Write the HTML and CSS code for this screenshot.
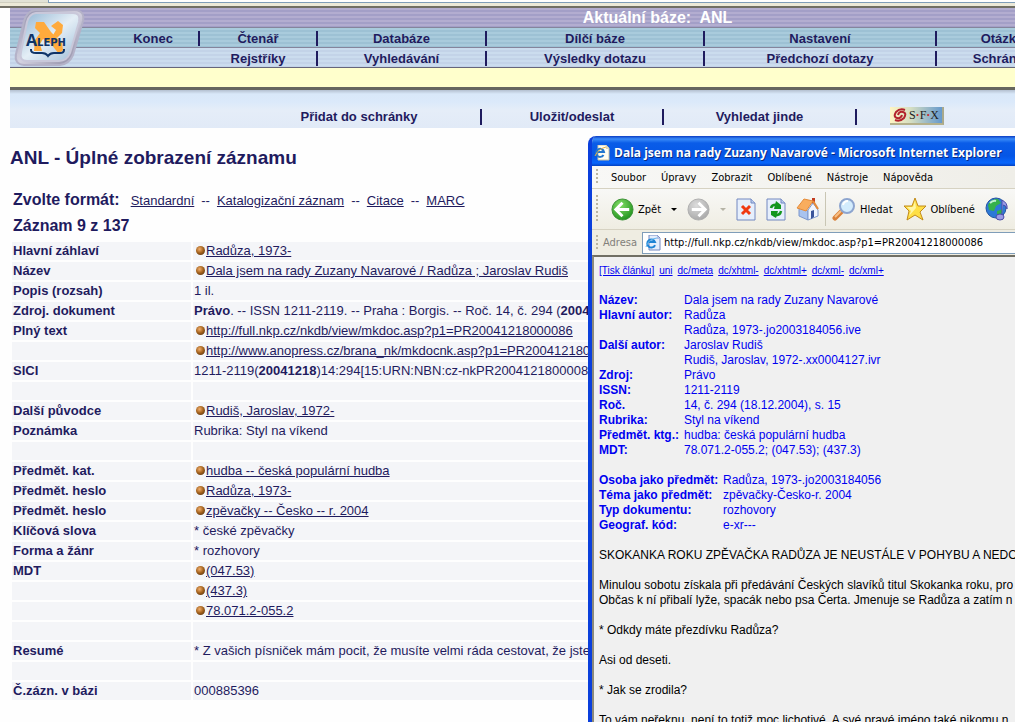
FILE: index.html
```
<!DOCTYPE html>
<html lang="cs">
    <head>
        <meta charset="utf-8">
        <title>ANL - Úplné zobrazení záznamu</title>
        <link rel="stylesheet" href="styles.css">
    </head>
    <body>
        <div class="chrome"><div class="chrome-tab"></div><div class="chrome-field"></div></div>
        <div class="page">
            <header class="top">
                <svg class="logo" viewBox="0 0 74 60" width="74" height="60">
                    <defs>
                        <linearGradient id="lg" x1="0" y1="0" x2="1" y2="1">
                            <stop offset="0" stop-color="#8fb4d2"/>
                            <stop offset=".5" stop-color="#e4eef6"/>
                            <stop offset="1" stop-color="#9dbdd8"/>
                        </linearGradient>
                        <linearGradient id="rim" x1="0" y1="0" x2="1" y2="1">
                            <stop offset="0" stop-color="#8d8aa6"/>
                            <stop offset=".5" stop-color="#d4d2e0"/>
                            <stop offset="1" stop-color="#85819c"/>
                        </linearGradient>
                    </defs>
                    <path d="M22 2 H62 Q72 3 70 13 L60 47 Q56 56 47 57 H11 Q1 56 3 46 L11 13 Q14 3 22 2Z" fill="url(#rim)" stroke="#b4b2c8" stroke-width="2"/>
                    <path d="M23 5 H60 Q68 5 66 14 L57 45 Q54 53 46 53 H14 Q6 53 8 44 L14 14 Q16 6 23 5Z" fill="url(#lg)" stroke="#c9c8da" stroke-width="2"/>
                    <path d="M23 14 L31 14 L38 24 L49 35 L50 42 L46 46 L38 36 L30 31 L27 36 L29 43 H21 L22 32 L27 25 L22 20Z" fill="#ffaa3c"/>
                    <path d="M38 18 L45 13 L50 17 L49 25 L44 30 L40 27 L43 22Z" fill="#ffaa3c"/>
                    <text x="13" y="38" class="logo-text"><tspan class="logo-big">A</tspan>LEPH</text>
                    <path d="M18 41 V42 Q18 45 23 45 H29 Q33 45 35 48 Q37 45 41 45 H47 Q51 45 51 42 V41" fill="none" stroke="#0f3468" stroke-width="2"/>
                </svg>
                <div class="base">Aktuální báze:&nbsp; ANL</div>
                <nav class="menu menu1">
                    <a href="#">Konec</a>
                    <a href="#">Čtenář</a>
                    <a href="#">Databáze</a>
                    <a href="#">Dílčí báze</a>
                    <a href="#">Nastavení</a>
                    <a href="#" class="last"><span>Otázky</span></a>
                </nav>
                <nav class="menu menu2">
                    <i></i>
                    <a href="#">Rejstříky</a>
                    <a href="#">Vyhledávání</a>
                    <a href="#">Výsledky dotazu</a>
                    <a href="#">Předchozí dotazy</a>
                    <a href="#" class="last"><span>Schránka</span></a>
                </nav>
                <div class="yellow"></div>
            </header>
            <nav class="actions">
                <a href="#">Přidat do schránky</a>
                <a href="#">Uložit/odeslat</a>
                <a href="#">Vyhledat jinde</a>
                <a href="#" class="sfx">
                    <svg viewBox="0 0 14 14" width="14" height="14">
                        <g fill="none" stroke="#b3222c" stroke-width="2">
                            <path d="M12 2 Q7 0 3 4 Q0 9 4 10 Q8 11 9 7"/>
                            <path d="M2 12 Q7 14 11 10 Q14 5 10 4 Q6 3 5 7"/>
                        </g>
                    </svg>
                    <span>S<b>·</b>F<b>·</b>X</span>
                </a>
            </nav>

            <main>
                <h1>ANL - Úplné zobrazení záznamu</h1>
                <div class="format">
                    <h2>Zvolte formát:</h2>
                    <a href="#">Standardní</a><span>--</span>
                    <a href="#">Katalogizační záznam</a><span>--</span>
                    <a href="#">Citace</a><span>--</span>
                    <a href="#">MARC</a>
                </div>
                <h2 class="count">Záznam 9 z 137</h2>
                <table class="record">
                    <tr><th>Hlavní záhlaví</th><td><i class="dot"></i><a href="#">Radůza, 1973-</a></td></tr>
                    <tr><th>Název</th><td><i class="dot"></i><a href="#">Dala jsem na rady Zuzany Navarové / Radůza ; Jaroslav Rudiš</a></td></tr>
                    <tr><th>Popis (rozsah)</th><td>1 il.</td></tr>
                    <tr><th>Zdroj. dokument</th><td><b>Právo</b>. -- ISSN 1211-2119. -- Praha : Borgis. -- Roč. 14, č. 294 (<b>20041218</b>), s. 15</td></tr>
                    <tr><th>Plný text</th><td><i class="dot"></i><a href="#">http://full.nkp.cz/nkdb/view/mkdoc.asp?p1=PR20041218000086</a></td></tr>
                    <tr><th></th><td><i class="dot"></i><a href="#">http://www.anopress.cz/brana_nk/mkdocnk.asp?p1=PR20041218000086</a></td></tr>
                    <tr><th>SICI</th><td>1211-2119(<b>20041218</b>)14:294[15:URN:NBN:cz-nkPR20041218000086</td></tr>
                    <tr><th></th><td></td></tr>
                    <tr><th>Další původce</th><td><i class="dot"></i><a href="#">Rudiš, Jaroslav, 1972-</a></td></tr>
                    <tr><th>Poznámka</th><td>Rubrika: Styl na víkend</td></tr>
                    <tr><th></th><td></td></tr>
                    <tr><th>Předmět. kat.</th><td><i class="dot"></i><a href="#">hudba -- česká populární hudba</a></td></tr>
                    <tr><th>Předmět. heslo</th><td><i class="dot"></i><a href="#">Radůza, 1973-</a></td></tr>
                    <tr><th>Předmět. heslo</th><td><i class="dot"></i><a href="#">zpěvačky -- Česko -- r. 2004</a></td></tr>
                    <tr><th>Klíčová slova</th><td>* české zpěvačky</td></tr>
                    <tr><th>Forma a žánr</th><td>* rozhovory</td></tr>
                    <tr><th>MDT</th><td><i class="dot"></i><a href="#">(047.53)</a></td></tr>
                    <tr><th></th><td><i class="dot"></i><a href="#">(437.3)</a></td></tr>
                    <tr><th></th><td><i class="dot"></i><a href="#">78.071.2-055.2</a></td></tr>
                    <tr><th></th><td></td></tr>
                    <tr><th>Resumé</th><td>* Z vašich písniček mám pocit, že musíte velmi ráda cestovat, že jste</td></tr>
                    <tr><th></th><td></td></tr>
                    <tr><th>Č.zázn. v bázi</th><td>000885396</td></tr>
                </table>
            </main>
        </div>

        <section class="window">
            <div class="titlebar">
                <svg viewBox="0 0 16 16" width="16" height="16">
                    <path d="M4 0 H12 L15 3 V15 H4Z" fill="#fffdf2" stroke="#c9c3a4"/>
                    <path d="M12 0 V4 H15" fill="#d8d2b8"/>
                    <path d="M9.500 10 A4 4 0 1 1 10 7 H3" fill="none" stroke="#2377cf" stroke-width="2"/>
                    <path d="M1 11 Q4 4 12 2" fill="none" stroke="#e6b040"/>
                </svg>
                <span>Dala jsem na rady Zuzany Navarové - Microsoft Internet Explorer</span>
            </div>
            <div class="menubar">
                <i class="grip"></i>
                <button type="button">Soubor</button>
                <button type="button">Úpravy</button>
                <button type="button">Zobrazit</button>
                <button type="button">Oblíbené</button>
                <button type="button">Nástroje</button>
                <button type="button">Nápověda</button>
            </div>
            <div class="tools">
                <i class="grip"></i>
                <button type="button">
                    <svg viewBox="0 0 24 24" width="23" height="23">
                        <defs><radialGradient id="gb" cx=".4" cy=".3" r=".8"><stop offset="0" stop-color="#83dd65"/><stop offset="1" stop-color="#178c18"/></radialGradient></defs>
                        <circle cx="12" cy="12" r="11" fill="url(#gb)" stroke="#3b8f35"/>
                        <path d="M12 5 L5 12 L12 19 M6 12 H19" fill="none" stroke="#fff" stroke-width="3"/>
                    </svg>
                    <span>Zpět</span>
                </button>
                <button type="button" aria-label="Historie zpět"><svg viewBox="0 0 6 3" width="6" height="3"><path d="M0 0 H6 L3 3Z" fill="#000"/></svg></button>
                <button type="button" aria-label="Vpřed">
                    <svg viewBox="0 0 24 24" width="23" height="23">
                        <defs><radialGradient id="gf" cx=".4" cy=".3" r=".8"><stop offset="0" stop-color="#dcdcdc"/><stop offset="1" stop-color="#a4a4a4"/></radialGradient></defs>
                        <circle cx="12" cy="12" r="11" fill="url(#gf)" stroke="#adadad"/>
                        <path d="M12 5 L19 12 L12 19 M18 12 H5" fill="none" stroke="#fff" stroke-width="3"/>
                    </svg>
                </button>
                <button type="button" aria-label="Historie vpřed"><svg viewBox="0 0 6 3" width="6" height="3"><path d="M0 0 H6 L3 3Z" fill="#b5b3a6"/></svg></button>
                <button type="button" aria-label="Zastavit">
                    <svg viewBox="0 0 20 23" width="20" height="23">
                        <path d="M1 1 H15 L19 5 V22 H1Z" fill="#e6effc" stroke="#7288c0"/>
                        <path d="M15 1 V5 H19" fill="#b9cbee" stroke="#7288c0"/>
                        <path d="M6 8 L14 16 M14 8 L6 16" stroke="#f03a12" stroke-width="3"/>
                    </svg>
                </button>
                <button type="button" aria-label="Aktualizovat">
                    <svg viewBox="0 0 20 23" width="20" height="23">
                        <path d="M1 1 H15 L19 5 V22 H1Z" fill="#e6effc" stroke="#7288c0"/>
                        <path d="M15 1 V5 H19" fill="#b9cbee" stroke="#7288c0"/>
                        <path d="M5 10 Q6 6 12 7" fill="none" stroke="#12961d" stroke-width="2.500"/>
                        <path d="M10 3 L15 7 V11 H8Z" fill="#12961d"/>
                        <path d="M15 13 Q14 18 8 17" fill="none" stroke="#12961d" stroke-width="2.500"/>
                        <path d="M10 20 L5 17 V13 H12Z" fill="#12961d"/>
                    </svg>
                </button>
                <div class="pair">
                    <button type="button" aria-label="Domů">
                        <svg viewBox="0 0 23 24" width="23" height="24">
                            <path d="M16 1 H19 V8 H16Z" fill="#c23c20"/>
                            <path d="M3 11 L12 14 V23 L3 19Z" fill="#a9c3ee" stroke="#7d97cc"/>
                            <path d="M12 13 L17 6 L22 13 V19 L12 23Z" fill="#eff5ff" stroke="#7d97cc"/>
                            <path d="M8 2 L17 4 L10 14 L1 11Z" fill="#f9ad5e" stroke="#e58b39"/>
                            <path d="M17 4 L22 12" stroke="#e58b39" stroke-width="2"/>
                            <path d="M15 14 L18 13 V20 L15 22Z" fill="#39549b"/>
                        </svg>
                    </button>
                    <i class="line"></i>
                    <button type="button">
                        <svg viewBox="0 0 24 24" width="24" height="24">
                            <path d="M10 14 L3 21" stroke="#d9813a" stroke-width="5" stroke-linecap="round"/>
                            <path d="M9 14 L3 20" stroke="#f8c083" stroke-width="2"/>
                            <circle cx="15" cy="9" r="7" fill="#d3ecfd" stroke="#8da5cf" stroke-width="2"/>
                            <path d="M11 8 Q12 4 16 4" fill="none" stroke="#fff" stroke-width="2"/>
                        </svg>
                        <span>Hledat</span>
                    </button>
                </div>
                <button type="button">
                    <svg viewBox="0 0 24 24" width="24" height="24">
                        <path d="M12 1 L15 9 L23 9 L17 15 L20 23 L12 18 L4 23 L6 14 L1 9 L9 9Z" fill="#ffdf45" stroke="#c18a19"/>
                        <path d="M12 4 L13 11 L6 19 L8 14 L4 10 H10Z" fill="#fff6a6"/>
                    </svg>
                    <span>Oblíbené</span>
                </button>
                <button type="button" aria-label="Média">
                    <svg viewBox="0 0 24 24" width="24" height="24">
                        <circle cx="11" cy="11" r="10" fill="#2d79d6" stroke="#2656a0"/>
                        <path d="M3 8 Q6 1 13 2 L16 6 L11 9 L9 14 L4 13Z M12 14 L18 12 L16 18 L12 20Z" fill="#35b14a"/>
                        <path d="M5 6 Q8 3 11 4" stroke="#bff0d0" stroke-width="2" fill="none"/>
                        <path d="M17 19 V3 Q23 6 22 12 Q21 8 18 8" fill="#9a9ce6" stroke="#4a4ca8"/>
                        <ellipse cx="15" cy="20" rx="4" ry="3" fill="#9a9ce6" stroke="#4a4ca8"/>
                    </svg>
                </button>
            </div>
            <div class="address">
                <i class="grip"></i>
                <label for="url">Adresa</label>
                <div class="field">
                    <svg viewBox="0 0 16 16" width="16" height="16">
                        <path d="M4 0 H12 L15 3 V15 H4Z" fill="#e3edfc" stroke="#7288c0"/>
                        <path d="M12 0 V4 H15" fill="#aebfe6"/>
                        <path d="M10 10 A4 4 0 1 1 10 7 H3" fill="none" stroke="#1d83d4" stroke-width="2"/>
                        <path d="M1 12 Q3 4 12 3" fill="none" stroke="#66b6ee"/>
                    </svg>
                    <input type="text" id="url" value="http://full.nkp.cz/nkdb/view/mkdoc.asp?p1=PR20041218000086">
                </div>
            </div>
            <article class="doc">
                <div class="formats">
                    <a href="#">[Tisk článku]</a>
                    <a href="#">uni</a>
                    <a href="#">dc/meta</a>
                    <a href="#">dc/xhtml-</a>
                    <a href="#">dc/xhtml+</a>
                    <a href="#">dc/xml-</a>
                    <a href="#">dc/xml+</a>
                </div>
                <table class="meta">
                    <tr><th>Název:</th><td>Dala jsem na rady Zuzany Navarové</td></tr>
                    <tr><th>Hlavní autor:</th><td>Radůza<br>Radůza, 1973-.jo2003184056.ive</td></tr>
                    <tr><th>Další autor:</th><td>Jaroslav Rudiš<br>Rudiš, Jaroslav, 1972-.xx0004127.ivr</td></tr>
                    <tr><th>Zdroj:</th><td>Právo</td></tr>
                    <tr><th>ISSN:</th><td>1211-2119</td></tr>
                    <tr><th>Roč.</th><td>14, č. 294 (18.12.2004), s. 15</td></tr>
                    <tr><th>Rubrika:</th><td>Styl na víkend</td></tr>
                    <tr><th>Předmět. ktg.:</th><td>hudba: česká populární hudba</td></tr>
                    <tr><th>MDT:</th><td>78.071.2-055.2; (047.53); (437.3)</td></tr>
                </table>
                <table class="meta subject">
                    <tr><th>Osoba jako předmět:</th><td>Radůza, 1973-.jo2003184056</td></tr>
                    <tr><th>Téma jako předmět:</th><td>zpěvačky-Česko-r. 2004</td></tr>
                    <tr><th>Typ dokumentu:</th><td>rozhovory</td></tr>
                    <tr><th>Geograf. kód:</th><td>e-xr---</td></tr>
                </table>
                <p>SKOKANKA ROKU ZPĚVAČKA RADŮZA JE NEUSTÁLE V POHYBU A NEDOK</p>
                <p>Minulou sobotu získala při předávání Českých slavíků titul Skokanka roku, pro<br>Občas k ní přibalí lyže, spacák nebo psa Čerta. Jmenuje se Radůza a zatím n</p>
                <p>* Odkdy máte přezdívku Radůza?</p>
                <p>Asi od deseti.</p>
                <p>* Jak se zrodila?</p>
                <p>To vám neřeknu, není to totiž moc lichotivé. A své pravé jméno také nikomu n</p>
            </article>
        </section>
    </body>
</html>
```
FILE: styles.css
```
*{
    box-sizing: border-box;
}

body{
    margin: 0;
    position: relative;
    height: 100vh;
    overflow: hidden;
    background-color: #fefefe;
    color: #1f1b5e;
    font-family: "Liberation Sans", Arial, sans-serif;
    font-size: 13px;
}

a{
    color: inherit;
}

i{
    font-style: normal;
}

.chrome{
    display: flex;
    height: 8px;
    background-color: #ece9d8;
    border-bottom: 2px solid #716f64;
}

.chrome-tab{
    width: 48px;
    height: 3px;
    background-color: #e2e2d6;
    border-bottom: 1px solid #d0cfc0;
}

.chrome-field{
    flex: 1;
    height: 3px;
    background-color: #fff;
    border-left: 1px solid #7f9db9;
    border-bottom: 1px solid #7f9db9;
}

.page{
    margin-left: 10px;
}

.top{
    position: relative;
}

.logo{
    position: absolute;
    left: 3px;
    top: 0;
}

.logo-text{
    font-family: "DejaVu Sans", sans-serif;
    font-weight: bold;
    font-size: 10px;
    fill: #0f3468;
}

.logo-big{
    font-family: "Open Sans", sans-serif;
    font-size: 16px;
}

.base{
    height: 20px;
    padding-left: 290px;
    background: repeating-linear-gradient(#b3add0 0 2px, #a39fc7 2px 4px);
    border-bottom: 1px solid #85859c;
    color: #fff;
    font-size: 16px;
    font-weight: bold;
    line-height: 19px;
    text-align: center;
}

.menu{
    display: grid;
    grid-template-columns: 190fr 118fr 169fr 218fr 232fr 78fr;
    height: 20px;
    padding: 3px 0 1px;
    font-weight: bold;
    line-height: 15px;
}

.menu a{
    border-right: 2px solid #1f1b5e;
    text-align: center;
    text-decoration: none;
    white-space: nowrap;
    overflow: hidden;
}

.menu1{
    background: repeating-linear-gradient(#a9cbdc 0 2px, #9dc1d4 2px 4px);
    border-bottom: 1px solid #85859c;
}

.menu1 a:first-child{
    padding-left: 98px;
}

.menu2{
    background: repeating-linear-gradient(#cbdcee 0 2px, #c3d3e8 2px 4px);
    border-bottom: 1px solid #66667a;
}

.menu .last{
    border-right: 0;
}

.last span{
    display: block;
    width: 130px;
}

.yellow{
    height: 22px;
    background-color: #ffffcc;
    border-bottom: 3px solid #66665e;
}

.actions{
    display: grid;
    grid-template-columns: 472fr 182fr 193fr 158fr;
    height: 38px;
    padding: 19px 0 4px;
    background: linear-gradient(#b4c0d0, #d9e8f9 4px, #dbe9fa 12px, #e5edf8 20px, #e1eaf7);
    font-weight: bold;
    line-height: 15px;
}

.actions a{
    border-right: 2px solid #1f1b5e;
    text-align: center;
    text-decoration: none;
    white-space: nowrap;
}

.actions a:first-child{
    padding-left: 228px;
}

.actions .sfx{
    display: flex;
    align-items: center;
    justify-content: space-around;
    width: 54px;
    height: 18px;
    margin: -2px 0 0 33px;
    padding: 0 2px;
    background: linear-gradient(90deg, #fff5c4, #d5dec2 40%, #6699cc);
    border: 0;
    border-right: 2px solid #a9a98c;
    border-bottom: 2px solid #b5b18c;
    color: #222;
    font-family: "Liberation Serif", serif;
    font-weight: normal;
    font-size: 12px;
}

.sfx b{
    color: #c22;
}

h1{
    margin: 18px 0 0;
    font-size: 19px;
    line-height: 24px;
}

h2{
    margin: 0;
    font-size: 16px;
    line-height: 20px;
}

.format{
    display: flex;
    align-items: center;
    gap: 7px;
    margin: 20px 0 6px;
    padding-left: 3px;
}

.format h2{
    margin-right: 4px;
}

.count{
    padding-left: 3px;
}

.record{
    width: 100%;
    margin-top: 4px;
    table-layout: fixed;
    border-spacing: 2px;
}

.record th, .record td{
    height: 18px;
    padding: 0 1px;
    background-color: #f4f5f8;
    line-height: 18px;
    text-align: left;
    white-space: nowrap;
    overflow: hidden;
}

.record th{
    width: 179px;
}

.dot{
    display: inline-block;
    width: 9px;
    height: 9px;
    margin: 0 1px 0 2px;
    border-radius: 50%;
    background: radial-gradient(circle at 40% 35%, #f0b070, #a8651f 45%, #3c2208);
}

/* popup window */
.window{
    position: absolute;
    left: 588px;
    right: 0;
    top: 136px;
    bottom: 0;
    display: flex;
    flex-direction: column;
    overflow: hidden;
    background-color: #ece9d8;
    border-left: 4px solid #0a3fdc;
    border-top-left-radius: 8px;
    color: #000;
    font-family: "DejaVu Sans Condensed", Tahoma, sans-serif;
    font-size: 11px;
    white-space: nowrap;
}

.titlebar{
    display: flex;
    align-items: center;
    gap: 4px;
    flex: none;
    height: 30px;
    padding: 3px 0 0 2px;
    background: linear-gradient(#0a3cc4, #3a8bf8 3px, #0a5ce8 7px, #0556e6 20px, #0866fc 27px, #0341c0);
    color: #fff;
    font-family: "Open Sans", "Trebuchet MS", sans-serif;
    font-size: 12px;
    font-weight: bold;
    text-shadow: 1px 1px #0a2a80;
}

.window button{
    display: flex;
    align-items: center;
    gap: 4px;
    padding: 0;
    border: 0;
    background: none;
    color: #000;
    font: inherit;
}

.window svg{
    flex: none;
}

.menubar{
    display: flex;
    align-items: center;
    gap: 15px;
    flex: none;
    height: 23px;
    padding-left: 4px;
    background: linear-gradient(90deg, #f8f8f6, #efeee8);
    border-bottom: 1px solid #d6d2c2;
}

.grip{
    flex: none;
    width: 2px;
    height: 16px;
    background: repeating-linear-gradient(#b9b5a2 0 2px, transparent 2px 4px);
}

.menubar .grip{
    margin-right: -2px;
}

.tools{
    display: flex;
    align-items: center;
    gap: 10px;
    flex: none;
    height: 41px;
    padding-left: 4px;
    background: linear-gradient(#f8f8f6, #efede2);
    border-bottom: 1px solid #d6d2c2;
}

.tools button, .pair{
    flex: none;
}

.tools .grip{
    height: 28px;
    margin-right: 3px;
}

.pair{
    display: flex;
    align-items: center;
    gap: 6px;
}

.line{
    width: 1px;
    height: 34px;
    background-color: #c9c6b4;
}

.address{
    display: flex;
    align-items: center;
    gap: 5px;
    flex: none;
    height: 25px;
    padding-left: 4px;
    background-color: #efede2;
}

.address label{
    color: #82807a;
}

.field{
    display: flex;
    align-items: center;
    gap: 3px;
    flex: 1;
    height: 22px;
    padding-left: 2px;
    background-color: #fff;
    border: 1px solid #7f9db9;
    border-right: 0;
}

.field input{
    flex: 1;
    min-width: 0;
    padding: 0;
    border: 0;
    outline: 0;
    background: none;
    color: #000;
    font: inherit;
}

.doc{
    flex: 1;
    min-height: 0;
    overflow: hidden;
    padding: 6px 0 0 5px;
    background-color: #f0f0f0;
    border-top: 2px solid #716f64;
    border-left: 2px solid #8c8a7c;
    font-family: "Liberation Sans", Arial, sans-serif;
    font-size: 12px;
    line-height: 15px;
}

.formats{
    display: flex;
    gap: 5px;
    margin-bottom: 15px;
    color: #0000f0;
    font-size: 10px;
}

.meta{
    margin-bottom: 15px;
    border-collapse: collapse;
    color: #0000f0;
}

.meta th, .meta td{
    padding: 0;
    text-align: left;
    vertical-align: top;
}

.meta th{
    width: 85px;
}

.subject th{
    width: 124px;
}

.doc p{
    margin: 0 0 15px;
}
```
